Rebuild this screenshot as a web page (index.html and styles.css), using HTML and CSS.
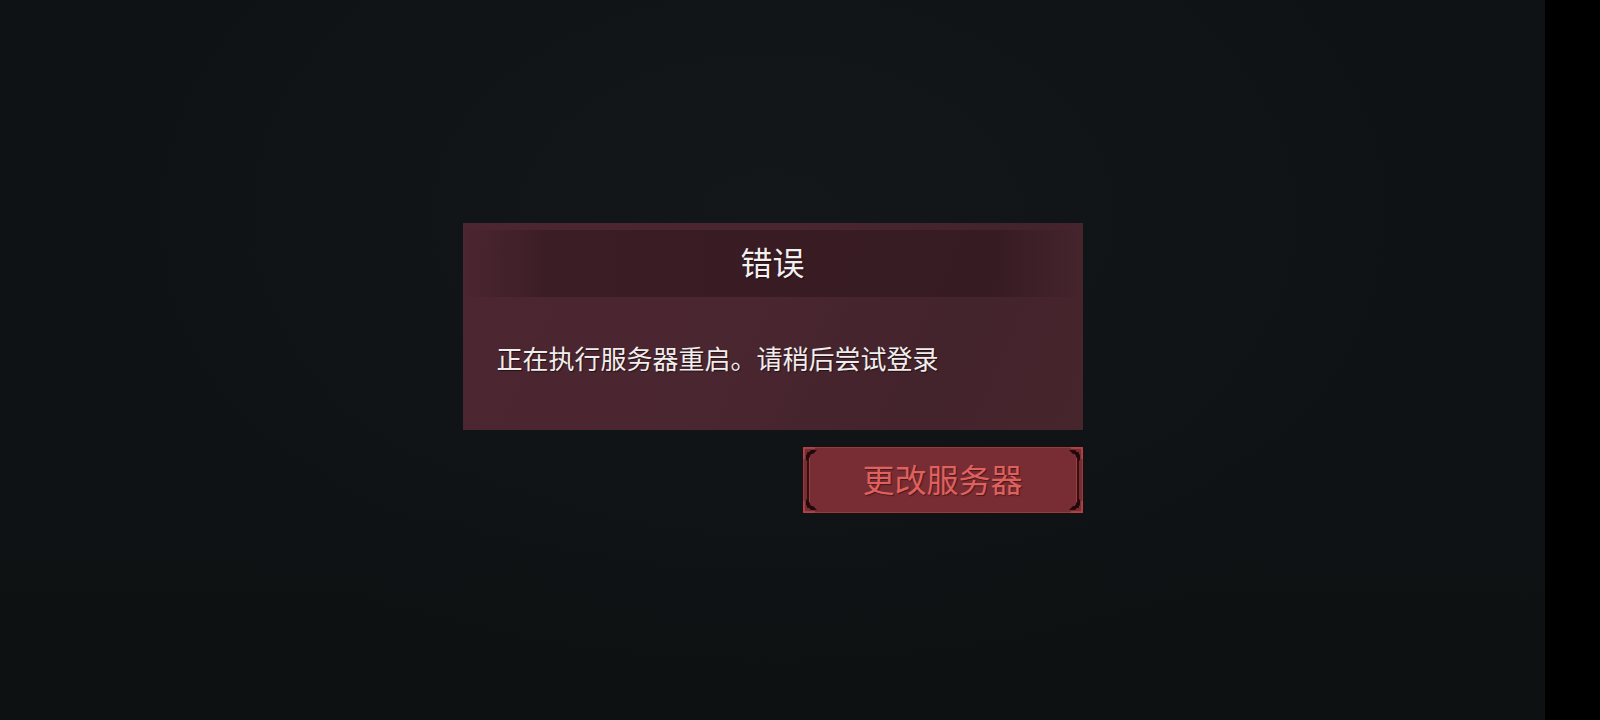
FILE: index.html
```html
<!DOCTYPE html>
<html lang="zh-CN">
<head>
<meta charset="utf-8">
<title>错误</title>
<link rel="stylesheet" href="styles.css">
</head>
<body>
<div class="screen">
  <main class="stage">
    <div class="panel">
      <section class="dialog">
        <header class="dialog-head"><h1 class="dialog-title">错误</h1></header>
        <div class="dialog-body"><p class="dialog-msg">正在执行服务器重启。请稍后尝试登录</p></div>
      </section>
      <div class="actions">
        <button class="btn-red" type="button">
          <span class="btn-frame"></span>
          <svg class="corner tl" viewBox="0 0 16 16"><path d="M1 12 V1 H12" fill="none" stroke="#b8474a" stroke-width="1.4"/><path d="M3 14 V8 L8 3 H14 L10 7 H8.5 L7 8.5 V10 Z" fill="#220a0c"/></svg>
          <svg class="corner tr" viewBox="0 0 16 16"><path d="M1 12 V1 H12" fill="none" stroke="#b8474a" stroke-width="1.4"/><path d="M3 14 V8 L8 3 H14 L10 7 H8.5 L7 8.5 V10 Z" fill="#220a0c"/></svg>
          <svg class="corner bl" viewBox="0 0 16 16"><path d="M1 12 V1 H12" fill="none" stroke="#b8474a" stroke-width="1.4"/><path d="M3 14 V8 L8 3 H14 L10 7 H8.5 L7 8.5 V10 Z" fill="#220a0c"/></svg>
          <svg class="corner br" viewBox="0 0 16 16"><path d="M1 12 V1 H12" fill="none" stroke="#b8474a" stroke-width="1.4"/><path d="M3 14 V8 L8 3 H14 L10 7 H8.5 L7 8.5 V10 Z" fill="#220a0c"/></svg>
          <span class="btn-label">更改服务器</span>
        </button>
      </div>
    </div>
  </main>
  <aside class="side-strip"></aside>
</div>
</body>
</html>
```

FILE: styles.css
```css
html, body {
  margin: 0;
  padding: 0;
  height: 100%;
  background: #000;
}

body {
  font-family: "Noto Sans CJK SC", "Noto Sans", sans-serif;
}

.screen {
  display: flex;
  width: 1600px;
  height: 720px;
}

.stage {
  width: 1545px;
  height: 720px;
  display: flex;
  justify-content: center;
  padding-top: 223px;
  box-sizing: border-box;
  background:
    radial-gradient(ellipse at 50% 30%, rgba(22, 25, 28, 0.7) 0%, rgba(15, 18, 21, 0) 65%),
    linear-gradient(180deg, #0f1215 0%, #0e1214 60%, #0d1112 100%);
}

.side-strip {
  flex: 1;
  background: #000;
}

.panel {
  width: 620px;
  display: flex;
  flex-direction: column;
}

.dialog {
  height: 207px;
  display: flex;
  flex-direction: column;
  background:
    linear-gradient(115deg, #4c2630 0%, #4a2630 45%, #43232c 75%, #47252d 100%);
}

.dialog-head {
  margin-top: 7px;
  height: 67px;
  padding-bottom: 6px;
  box-sizing: border-box;
  display: flex;
  align-items: center;
  justify-content: center;
  background: linear-gradient(90deg, rgba(50, 24, 31, 0) 0%, rgba(52, 25, 32, 0.7) 14%, rgba(52, 25, 32, 0.8) 50%, rgba(50, 24, 31, 0.7) 86%, rgba(50, 24, 31, 0) 100%);
}

.dialog-title {
  margin: 0;
  font-size: 32px;
  font-weight: 400;
  line-height: 40px;
  color: #f3efef;
  text-shadow: 1px 1px 1px rgba(0, 0, 0, 0.55);
}

.dialog-body {
  padding: 43px 34px 0 34px;
}

.dialog-msg {
  margin: 0;
  font-size: 26px;
  line-height: 36px;
  color: #f1eded;
  text-shadow: 1px 1px 1px rgba(0, 0, 0, 0.55);
}

.actions {
  margin-top: 17px;
  display: flex;
  justify-content: flex-end;
}

.btn-red {
  position: relative;
  width: 280px;
  height: 66px;
  padding: 0 0 4px 0;
  border: 1px solid #a23739;
  background: #772d33;
  display: flex;
  align-items: center;
  justify-content: center;
  cursor: pointer;
  font-family: inherit;
}

.btn-frame {
  position: absolute;
  top: 4px;
  bottom: 4px;
  left: 3px;
  right: 3px;
  border-left: 2px solid #32100f;
  border-right: 2px solid #32100f;
  box-shadow: inset 1px 0 0 #9e3e3d, inset -1px 0 0 #9e3e3d;
  pointer-events: none;
}

.corner {
  position: absolute;
  width: 16px;
  height: 16px;
}

.corner.tl { top: -1px; left: -1px; }
.corner.tr { top: -1px; right: -1px; transform: scaleX(-1); }
.corner.bl { bottom: -1px; left: -1px; transform: scaleY(-1); }
.corner.br { bottom: -1px; right: -1px; transform: scale(-1, -1); }

.btn-label {
  position: relative;
  font-size: 32px;
  line-height: 40px;
  color: #df615e;
  text-shadow: 1px 1px 1px rgba(40, 8, 10, 0.6);
}
```
